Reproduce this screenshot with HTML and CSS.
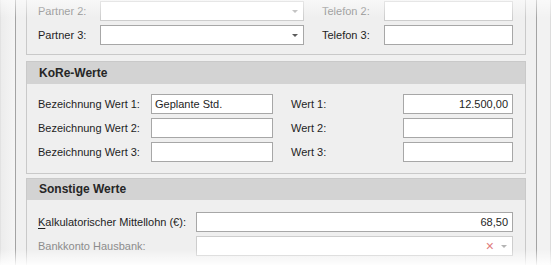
FILE: index.html
```html
<!DOCTYPE html>
<html lang="de">
<head>
    <meta charset="UTF-8">
    <title>Stammdaten</title>
    <link rel="stylesheet" href="styles.css">
</head>
<body>

    <div class="frame">
        <div class="edge-left"></div>

        <div class="panel">

            <!-- Partner (oben abgeschnitten) -->
            <div class="section section-cut">
                <div class="body grid-partner">
                    <label class="lbl disabled">Partner 2:</label>
                    <div class="combo disabled"><span class="arrow"></span></div>
                    <label class="lbl lbl-right disabled">Telefon 2:</label>
                    <div class="field disabled"></div>

                    <label class="lbl">Partner 3:</label>
                    <div class="combo"><span class="arrow"></span></div>
                    <label class="lbl lbl-right">Telefon 3:</label>
                    <div class="field"></div>
                </div>
            </div>

            <div class="section section-kore">
                <div class="head">KoRe-Werte</div>
                <div class="body grid-kore">
                    <label class="lbl">Bezeichnung Wert 1:</label>
                    <div class="field">Geplante Std.</div>
                    <label class="lbl lbl-right">Wert 1:</label>
                    <div class="field num">12.500,00</div>

                    <label class="lbl">Bezeichnung Wert 2:</label>
                    <div class="field"></div>
                    <label class="lbl lbl-right">Wert 2:</label>
                    <div class="field num"></div>

                    <label class="lbl">Bezeichnung Wert 3:</label>
                    <div class="field"></div>
                    <label class="lbl lbl-right">Wert 3:</label>
                    <div class="field num"></div>
                </div>
            </div>

            <div class="section section-other">
                <div class="head">Sonstige Werte</div>
                <div class="body grid-other">
                    <label class="lbl"><u>K</u>alkulatorischer Mittellohn (€):</label>
                    <div class="field num">68,50</div>

                    <label class="lbl disabled">Bankkonto Hausbank:</label>
                    <div class="combo disabled"><span class="clear">×</span><span class="arrow"></span></div>
                </div>
            </div>

        </div>

        <div class="edge-right"></div>

        <div class="fade-top"></div>
        <div class="fade-bottom"></div>
    </div>

</body>
</html>
```

FILE: styles.css
```css
html, body {
    margin: 0;
    height: 265px;
    overflow: hidden;
    background: #ffffff;
}
body {
    font-family: "Liberation Sans", Arial, sans-serif;
    font-size: 11px;
    color: #1e1e1e;
}
.frame {
    position: relative;
    display: flex;
    height: 265px;
}
.edge-left {
    width: 14px;
    border-left: 1px solid #e2e2e2;
    background: linear-gradient(to right, #ececec, #f5f5f5);
}
.edge-right {
    width: 13px;
    border-right: 1px solid #dcdcdc;
    background: #f2f2f2;
}
.panel {
    width: 500px;
    padding: 0 10px;
    border-left: 1px solid #a3a3a3;
    border-right: 1px solid #a3a3a3;
    background: #f0f0f0;
}
.section {
    border: 1px solid #c9c9c9;
    background: #efefef;
}
.section-cut {
    border-top: none;
}
.section-cut .body {
    padding: 1px 11px 9px;
}
.section-kore {
    margin-top: 6px;
}
.section-other {
    margin-top: 4px;
}
.head {
    height: 21px;
    line-height: 21px;
    padding-left: 12px;
    background: #d3d3d3;
    font-size: 12px;
    font-weight: bold;
    color: #262626;
}
.section-kore .head {
    height: 22px;
    line-height: 22px;
}
.body {
    display: grid;
    row-gap: 4px;
    align-items: center;
    padding: 10px 11px 11px;
}
.section-other .body {
    padding-top: 12px;
    padding-bottom: 12px;
}
.grid-partner {
    grid-template-columns: 62px 204px 80px 129px;
}
.grid-kore {
    grid-template-columns: 113px 122px 130px 110px;
}
.grid-other {
    grid-template-columns: 158px 317px;
}
.lbl {
    white-space: nowrap;
    line-height: 20px;
}
.lbl-right {
    padding-left: 18px;
}
.lbl u {
    text-decoration-thickness: 1px;
    text-underline-offset: 2px;
}
.lbl.disabled {
    color: #8c8c8c;
}
.field, .combo {
    box-sizing: border-box;
    height: 20px;
    line-height: 18px;
    padding: 0 4px 0 3px;
    border: 1px solid #a7a7a7;
    background: #ffffff;
    color: #1e1e1e;
    white-space: nowrap;
}
.field.num {
    text-align: right;
}
.field.disabled, .combo.disabled {
    border-color: #cdcdcd;
}
.combo {
    display: flex;
    justify-content: flex-end;
    align-items: center;
    gap: 7px;
    padding-right: 5px;
}
.arrow {
    width: 0;
    height: 0;
    border-left: 3px solid transparent;
    border-right: 3px solid transparent;
    border-top: 3px solid #5c5c5c;
    margin-top: 1px;
}
.combo.disabled .arrow {
    border-top-color: #b4b4b4;
}
.clear {
    color: #e07b7b;
    font-size: 14px;
    line-height: 18px;
}
.fade-top {
    position: absolute;
    left: 0;
    right: 0;
    top: 0;
    height: 18px;
    background: linear-gradient(to bottom, rgba(255,255,255,0.55), rgba(255,255,255,0));
    pointer-events: none;
}
.fade-bottom {
    position: absolute;
    left: 0;
    right: 0;
    bottom: 0;
    height: 16px;
    background: linear-gradient(to bottom, rgba(255,255,255,0), rgba(255,255,255,0.9));
    pointer-events: none;
}
```
